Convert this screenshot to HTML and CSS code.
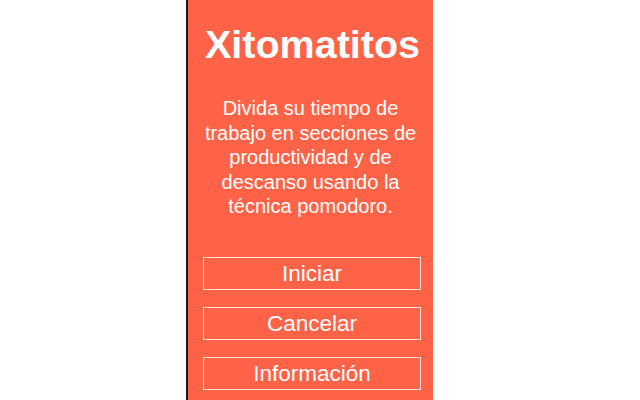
FILE: index.html
```
<!DOCTYPE html>
<html lang="es">
<head>
<meta charset="utf-8">
<title>Xitomatitos</title>
<link rel="stylesheet" href="styles.css">
</head>
<body>
<div class="page">
  <div class="edge"></div>
  <main class="panel">
    <h1 class="title">Xitomatitos</h1>
    <p class="desc">Divida su tiempo de trabajo en secciones de productividad y de descanso usando la técnica pomodoro.</p>
    <div class="actions">
      <button class="btn">Iniciar</button>
      <button class="btn">Cancelar</button>
      <button class="btn">Información</button>
    </div>
  </main>
</div>
</body>
</html>
```
FILE: styles.css
```
html, body {
  margin: 0;
  padding: 0;
  background: #ffffff;
  height: 100%;
  overflow: hidden;
}
.page {
  display: flex;
  height: 400px;
  padding-left: 186px;
  font-family: "Liberation Sans", Arial, sans-serif;
}
.edge {
  width: 2px;
  background: #1b1b1b;
}
.panel {
  width: 245px;
  background: #ff6347;
  color: #ffffff;
  padding: 22px 15px 0 15px;
  box-sizing: border-box;
  text-align: center;
}
.title {
  margin: 0 0 0 2px;
  font-size: 39.5px;
  font-weight: bold;
  line-height: 45px;
}
.desc {
  margin: 29px 0 0 0;
  font-size: 20px;
  line-height: 24.5px;
}
.actions {
  margin-top: 38px;
  display: flex;
  flex-direction: column;
  align-items: center;
  gap: 17px;
}
.btn {
  width: 218px;
  height: 33px;
  margin-left: 3px;
  box-sizing: border-box;
  background: transparent;
  border: 1px solid #ffe0d8;
  color: #ffffff;
  font-family: "Liberation Sans", Arial, sans-serif;
  font-size: 22.5px;
  line-height: 31px;
  padding: 0;
}
```
